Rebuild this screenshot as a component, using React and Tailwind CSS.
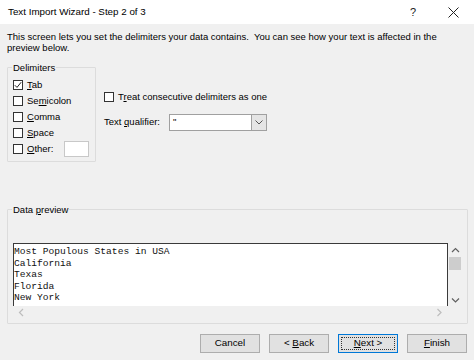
import React from 'react';

const Check = ({ checked }) => (
    <span className="w-[10px] h-[10px] border border-[#333333] bg-white flex items-center justify-center shrink-0">
        {checked && (
            <svg width="8" height="8" viewBox="0 0 8 8">
                <path d="M0.8 4.2 L3 6.4 L7.2 1.2" fill="none" stroke="#222" strokeWidth="1" />
            </svg>
        )}
    </span>
);

const U = ({ children }) => <span className="underline underline-offset-[1px]">{children}</span>;

const Chevron = ({ dir }) => {
    const paths = {
        up: 'M1 5 L4.5 1.5 L8 5',
        down: 'M1 1.5 L4.5 5 L8 1.5',
        left: 'M5 1 L1.5 4.5 L5 8',
        right: 'M1.5 1 L5 4.5 L1.5 8',
    };
    const vertical = dir === 'up' || dir === 'down';
    return (
        <svg width={vertical ? 9 : 7} height={vertical ? 7 : 9} viewBox={vertical ? '0 0 9 7' : '0 0 7 9'}>
            <path d={paths[dir]} fill="none" stroke={dir === 'left' || dir === 'right' ? '#bdbdbd' : '#606060'} strokeWidth="1.2" />
        </svg>
    );
};

const Btn = ({ children, focused }) => (
    <button
        className={
            'w-[60px] h-[19px] bg-[#e1e1e1] border flex items-center justify-center whitespace-pre text-[9.8px] ' +
            (focused
                ? 'border-[#0078d7] outline-1 outline-dotted outline-[#333] outline-offset-[-4px]'
                : 'border-[#adadad]')
        }
    >
        {children}
    </button>
);

const rows = [
    { label: <><U>T</U>ab</>, checked: true },
    { label: <>Se<U>m</U>icolon</> },
    { label: <><U>C</U>omma</> },
    { label: <><U>S</U>pace</> },
];

const preview = ['Most Populous States in USA', 'California', 'Texas', 'Florida', 'New York'];

export default function App() {
    return (
        <div className="w-[474px] h-[360px] bg-[#f0f0f0] flex flex-col font-['Liberation_Sans',Arial,sans-serif] text-[9.5px] text-black overflow-hidden select-none">
            {/* Title bar */}
            <div className="h-[24px] bg-white flex items-center pl-[8px] shrink-0">
                <span className="text-[9.8px] flex-1">Text Import Wizard - Step 2 of 3</span>
                <span className="text-[11px] w-[10px] text-center mr-[30px] text-[#222]">?</span>
                <svg width="11" height="11" viewBox="0 0 11 11" className="mr-[15px]">
                    <path d="M0.5 0.5 L10.5 10.5 M10.5 0.5 L0.5 10.5" stroke="#222" strokeWidth="1" />
                </svg>
            </div>

            {/* Description */}
            <div className="px-[7px] pt-[7px] leading-[11px] w-[448px]">
                This screen lets you set the delimiters your data contains.&nbsp; You can see how your text is affected in the preview below.
            </div>

            {/* Delimiters + options */}
            <div className="flex mt-[9px]">
                <fieldset className="ml-[7px] w-[89px] h-[100px] border border-[#dcdcdc] px-[5px] rounded-[1px]">
                    <legend className="ml-[-1px] px-[1px] leading-[11px]">Delimiters</legend>
                    <div className="flex flex-col pt-[4px]">
                        {rows.map((r, i) => (
                            <div key={i} className="h-[16px] flex items-center gap-[4px]">
                                <Check checked={r.checked} />
                                <span>{r.label}</span>
                            </div>
                        ))}
                        <div className="h-[16px] flex items-center gap-[4px]">
                            <Check />
                            <span className="w-[33px]"><U>O</U>ther:</span>
                            <span className="w-[25px] h-[16px] bg-white border border-[#c8c8c8]" />
                        </div>
                    </div>
                </fieldset>

                <div className="ml-[8px] pt-[27px] flex flex-col">
                    <div className="h-[16px] flex items-center gap-[4px]">
                        <Check />
                        <span>T<U>r</U>eat consecutive delimiters as one</span>
                    </div>
                    <div className="h-[17px] mt-[9px] flex items-center">
                        <span className="w-[65px]">Text <U>q</U>ualifier:</span>
                        <div className="w-[98px] h-[17px] bg-white border border-[#a0a0a0] flex">
                            <span className="flex-1 pl-[3px] leading-[13px]">"</span>
                            <span className="w-[15px] h-full bg-[#e5e5e5] border-l border-[#a0a0a0] flex items-center justify-center">
                                <svg width="8" height="5" viewBox="0 0 8 5">
                                    <path d="M0.5 0.5 L4 4 L7.5 0.5" fill="none" stroke="#555" strokeWidth="1" />
                                </svg>
                            </span>
                        </div>
                    </div>
                </div>
            </div>

            {/* Data preview */}
            <fieldset className="ml-[7px] mt-[42px] w-[461px] h-[120px] border border-[#dcdcdc] pl-[5px] rounded-[1px]">
                <legend className="ml-[-1px] px-[1px] leading-[11px]">Data <U>p</U>review</legend>
                <div className="pt-[28px] flex flex-col">
                    <div className="flex">
                        <div className="w-[435px] h-[63px] bg-white border-t border-l border-r border-[#3a3a3a] pt-[2px] overflow-hidden font-['Liberation_Mono','Courier_New',monospace] text-[9.6px] leading-[11.5px] whitespace-pre text-[#111]">
                            {preview.map((l) => (
                                <div key={l}>{l}</div>
                            ))}
                        </div>
                        <div className="w-[14px] h-[63px] flex flex-col items-center">
                            <div className="h-[14px] flex items-center justify-center">
                                <Chevron dir="up" />
                            </div>
                            <div className="w-[12px] h-[13px] bg-[#cdcdcd]" />
                            <div className="flex-1" />
                            <div className="h-[12px] flex items-center justify-center">
                                <Chevron dir="down" />
                            </div>
                        </div>
                    </div>
                    <div className="w-[435px] h-[12px] flex items-center justify-between px-[5px]">
                        <Chevron dir="left" />
                        <Chevron dir="right" />
                    </div>
                </div>
            </fieldset>

            {/* Buttons */}
            <div className="flex justify-end gap-[9px] pr-[7px] mt-[10px]">
                <Btn>Cancel</Btn>
                <Btn><span>{'<\u00a0'}</span><U>B</U><span>ack</span></Btn>
                <Btn focused><U>N</U><span>{'ext\u00a0>'}</span></Btn>
                <Btn><U>F</U>inish</Btn>
            </div>
        </div>
    );
}
